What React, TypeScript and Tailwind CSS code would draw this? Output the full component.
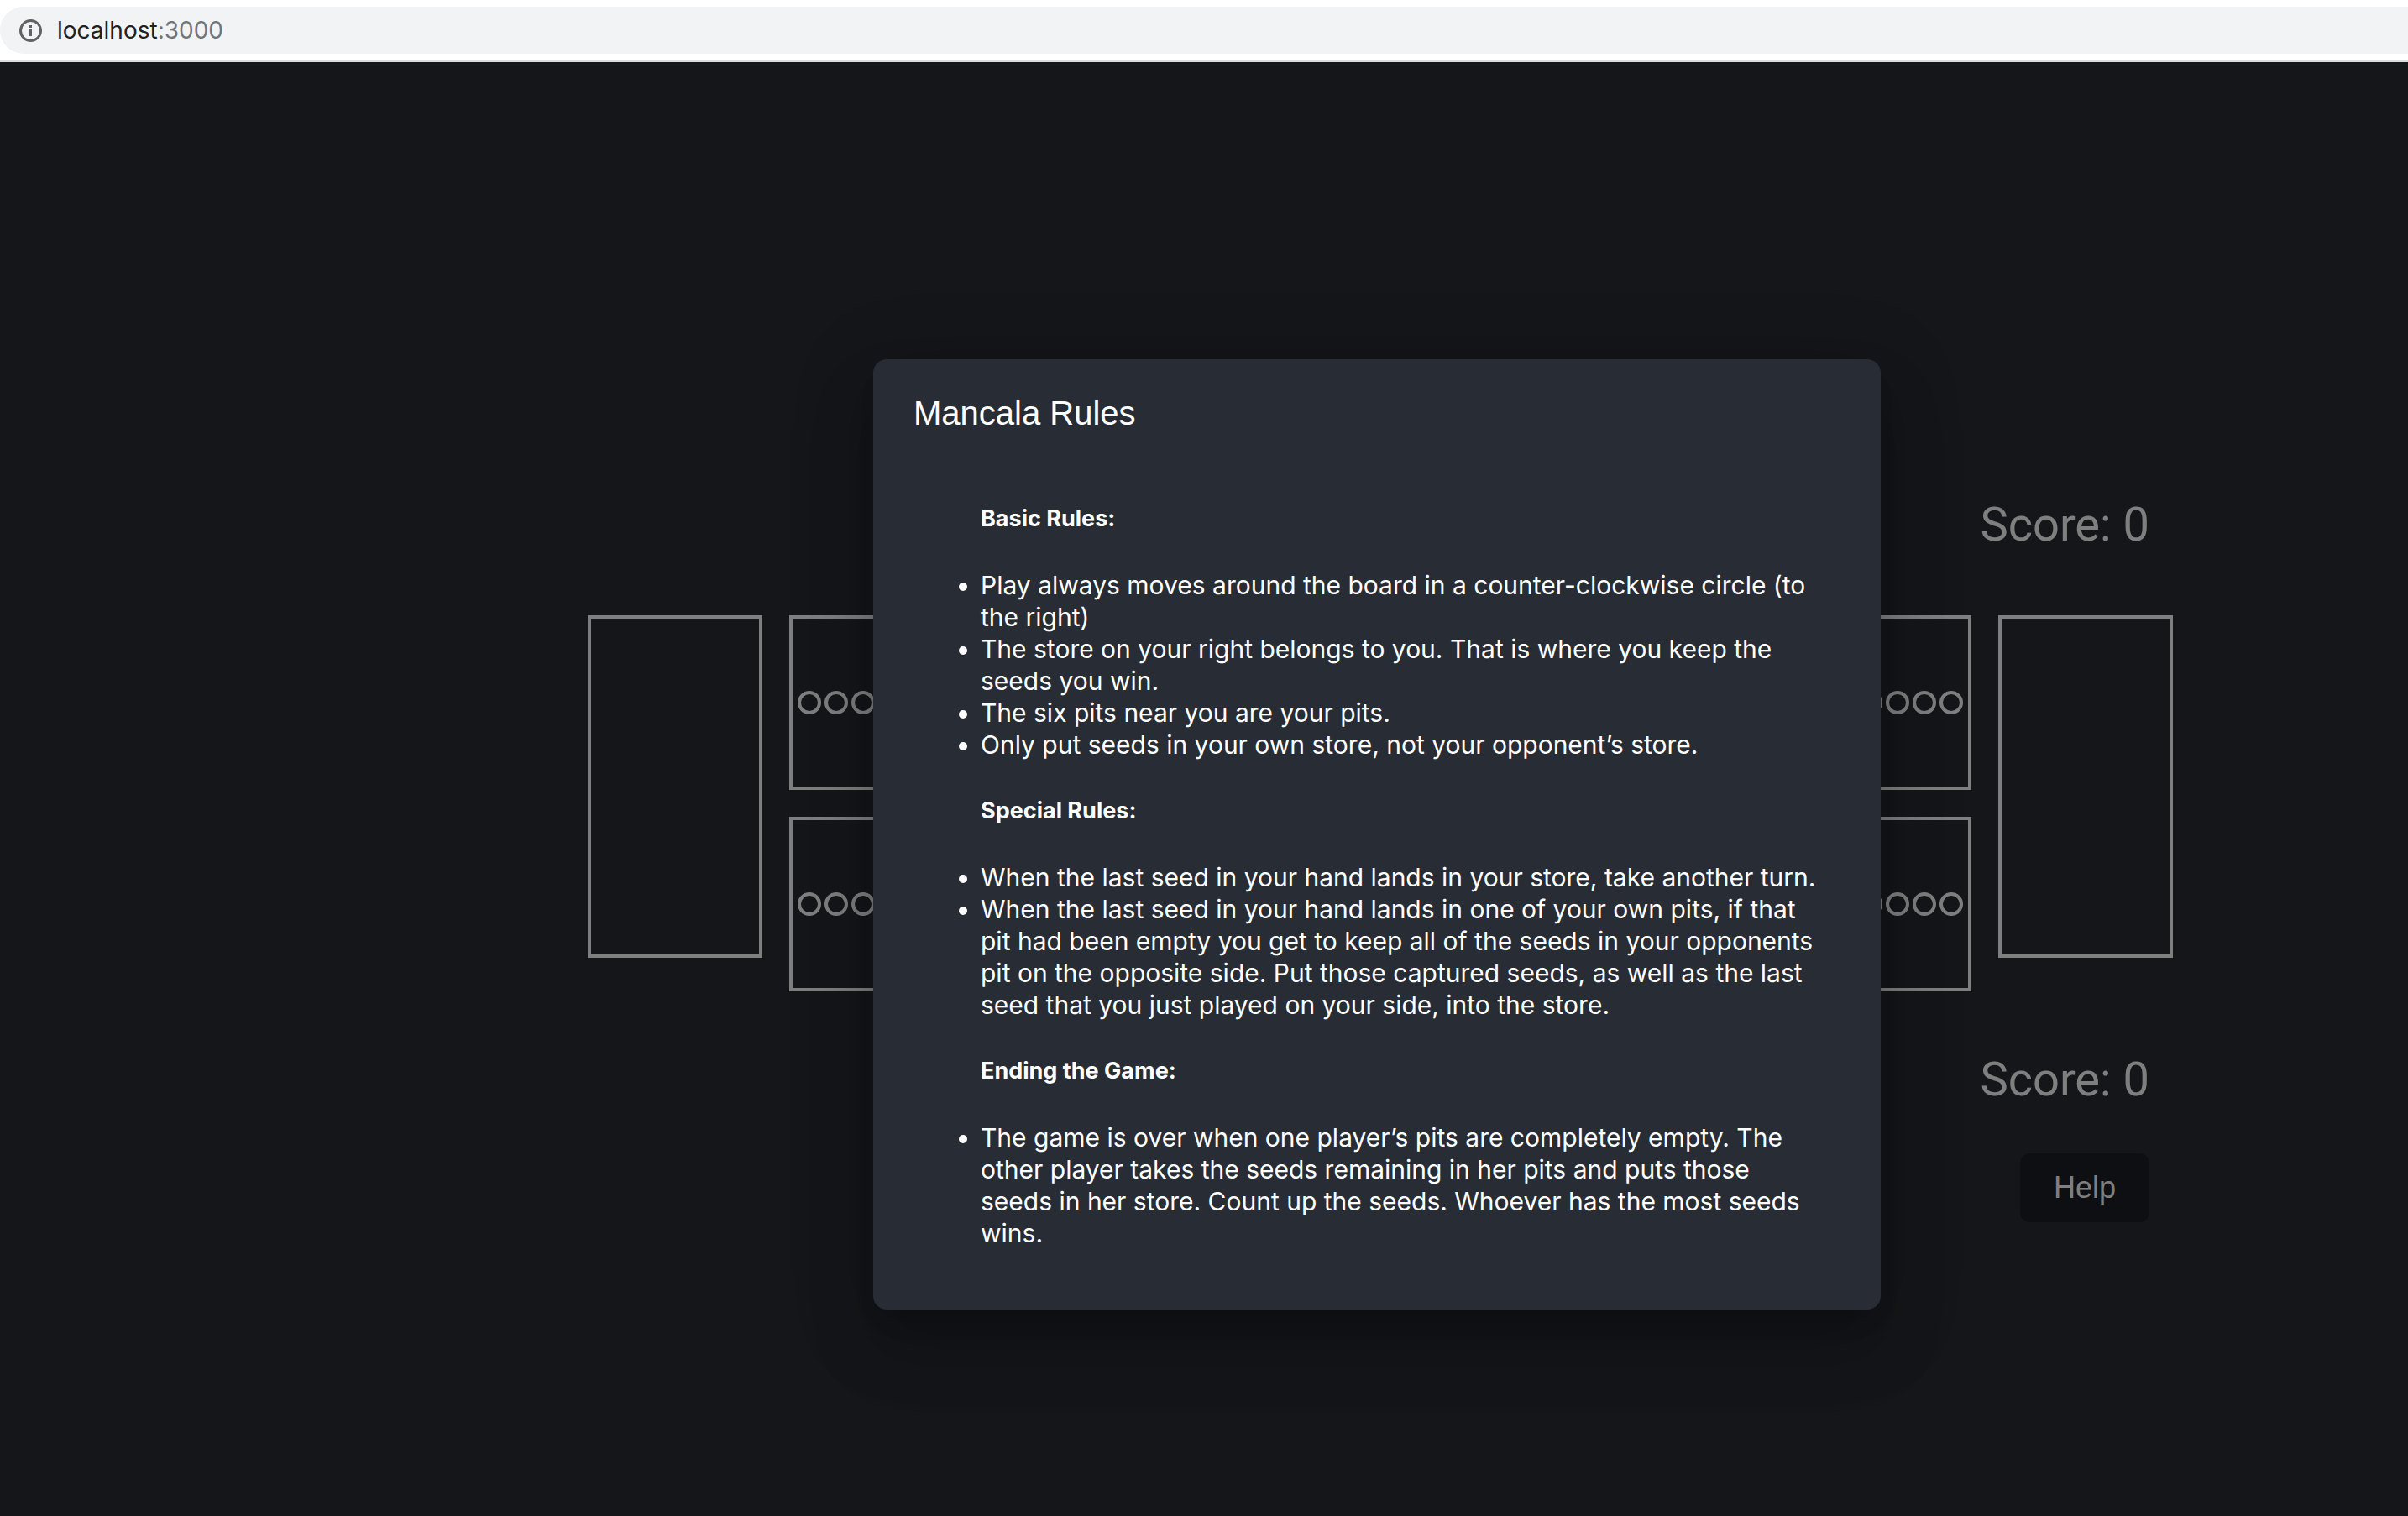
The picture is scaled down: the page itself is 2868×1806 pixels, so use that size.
import type { ReactNode } from 'react'

const PITS_PER_SIDE = 6
const SEEDS_PER_PIT = 6

const rules = [
  {
    title: 'Basic Rules:',
    items: [
      'Play always moves around the board in a counter-clockwise circle (to the right)',
      'The store on your right belongs to you. That is where you keep the seeds you win.',
      'The six pits near you are your pits.',
      'Only put seeds in your own store, not your opponent’s store.',
    ],
  },
  {
    title: 'Special Rules:',
    items: [
      'When the last seed in your hand lands in your store, take another turn.',
      'When the last seed in your hand lands in one of your own pits, if that pit had been empty you get to keep all of the seeds in your opponents pit on the opposite side. Put those captured seeds, as well as the last seed that you just played on your side, into the store.',
    ],
  },
  {
    title: 'Ending the Game:',
    items: [
      'The game is over when one player’s pits are completely empty. The other player takes the seeds remaining in her pits and puts those seeds in her store. Count up the seeds. Whoever has the most seeds wins.',
    ],
  },
]

function AddressBar() {
  return (
    <header className="border-b-2 border-[#dadce0] bg-white py-2">
      <div className="flex h-14 items-center gap-[18px] rounded-l-full bg-[#f1f3f4] pl-[23px] text-[28px] leading-[34px] text-[#202124]">
        <svg className="size-[27px] shrink-0" viewBox="0 0 27 27" fill="none" aria-hidden="true">
          <circle cx="13.5" cy="13.5" r="12" stroke="#5f6368" strokeWidth="3" />
          <path d="M12 7h3v3h-3zM12 12h3v8h-3z" fill="#5f6368" />
        </svg>
        <span>
          localhost<span className="text-[#70757a]">:3000</span>
        </span>
      </div>
    </header>
  )
}

function Score({ value }: { value: number }) {
  return (
    <p className="pr-7 text-right font-[Roboto,sans-serif] text-[56px] leading-[64px]">
      Score: {value}
    </p>
  )
}

function Store({ label }: { label: string }) {
  return <div aria-label={label} className="h-[408px] w-[208px] border-4 border-white" />
}

function Pit({ label }: { label: string }) {
  return (
    <button
      type="button"
      aria-label={label}
      className="flex size-[208px] items-center justify-center gap-1 border-4 border-white"
    >
      {Array.from({ length: SEEDS_PER_PIT }, (_, i) => (
        <span key={i} className="size-7 rounded-full border-4 border-white" />
      ))}
    </button>
  )
}

function PitRow({ player }: { player: number }) {
  return (
    <div className="flex gap-8">
      {Array.from({ length: PITS_PER_SIDE }, (_, i) => (
        <Pit key={i} label={`Player ${player}, pit ${i + 1}`} />
      ))}
    </div>
  )
}

function Board() {
  return (
    <div className="flex items-start gap-8">
      <Store label="Left store" />
      <div className="flex flex-col gap-8">
        <PitRow player={2} />
        <PitRow player={1} />
      </div>
      <Store label="Right store" />
    </div>
  )
}

function Backdrop({ children }: { children: ReactNode }) {
  return (
    <div className="absolute inset-0 flex items-center justify-center overflow-hidden bg-black/50 pt-[108px] pl-[412px]">
      {children}
    </div>
  )
}

function RulesDialog() {
  return (
    <div
      role="dialog"
      aria-modal="true"
      aria-labelledby="rules-title"
      className="w-full max-w-[1200px] rounded-2xl bg-[#282c34] shadow-[0_22px_30px_-14px_rgba(0,0,0,0.2),0_48px_76px_6px_rgba(0,0,0,0.14),0_18px_92px_16px_rgba(0,0,0,0.12)]"
    >
      <h2
        id="rules-title"
        className="px-12 py-8 font-['Liberation_Sans',Arial,sans-serif] text-[40px] leading-[64px]"
      >
        Mancala Rules
      </h2>
      <div className="flex flex-col gap-11 pt-[46px] pr-[72px] pb-[72px] pl-32">
        {rules.map((section) => (
          <section key={section.title} className="flex flex-col gap-11">
            <h3 className="text-[27px] leading-8 font-bold">{section.title}</h3>
            <ul className="list-disc text-[30px] leading-[38px]">
              {section.items.map((item) => (
                <li key={item}>{item}</li>
              ))}
            </ul>
          </section>
        ))}
      </div>
    </div>
  )
}

export default function App() {
  return (
    <div className="flex min-h-screen flex-col font-[Inter,sans-serif] text-white">
      <AddressBar />
      <main className="relative flex flex-1 flex-col items-center justify-center overflow-hidden bg-[#282c34] pt-[169px] pl-[420px]">
        <div className="flex flex-col">
          <Score value={0} />
          <div className="pt-[76px] pb-[73px]">
            <Board />
          </div>
          <Score value={0} />
          <div className="flex justify-end pt-14 pr-7">
            <button
              type="button"
              className="rounded-xl bg-[#1c1e24] px-10 py-5 font-['Liberation_Sans',Arial,sans-serif] text-[36px] leading-[42px]"
            >
              Help
            </button>
          </div>
        </div>
        <Backdrop>
          <RulesDialog />
        </Backdrop>
      </main>
    </div>
  )
}
